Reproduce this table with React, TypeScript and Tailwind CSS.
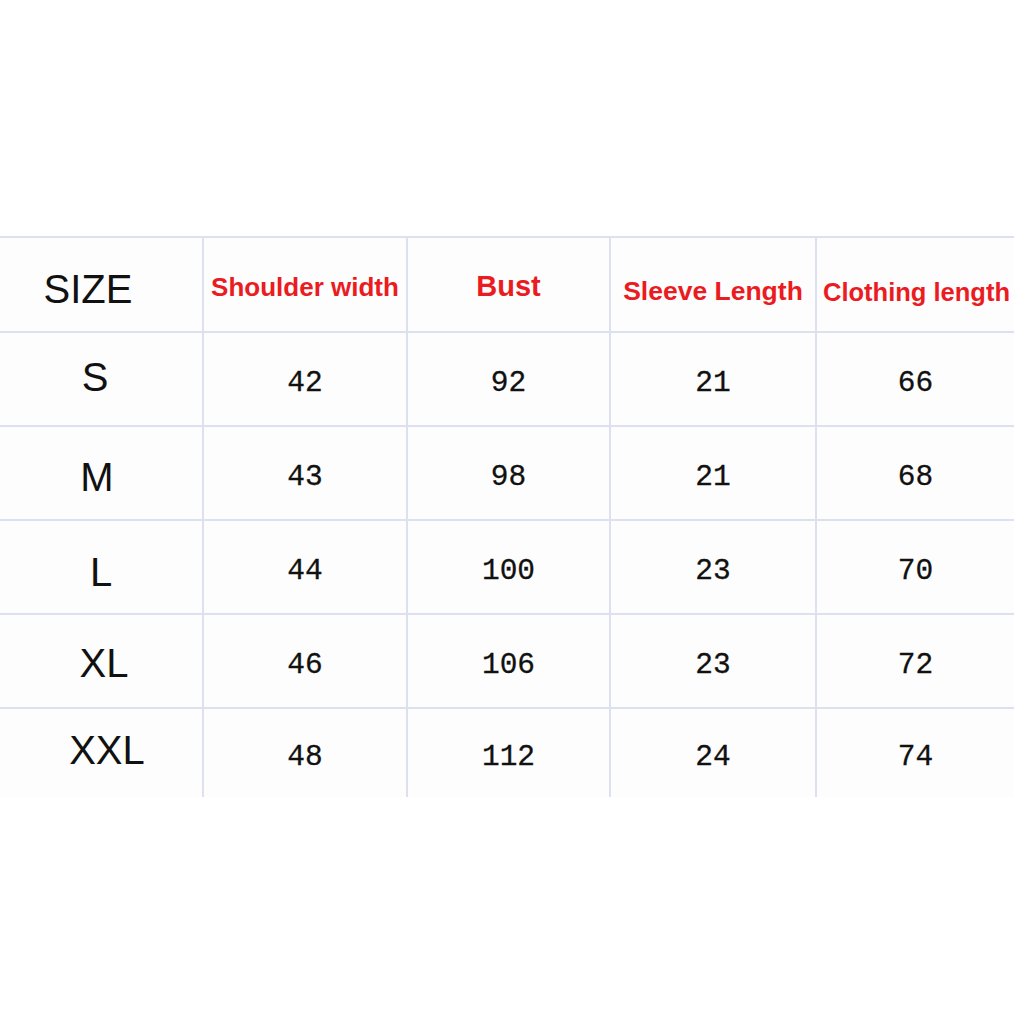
import React from 'react';

const rows: { size: string; shift: string; values: number[] }[] = [
  { size: 'S', shift: 'pb-[4px] pr-[12px]', values: [42, 92, 21, 66] },
  { size: 'M', shift: 'pt-[8px] pr-[8px]', values: [43, 98, 21, 68] },
  { size: 'L', shift: 'pt-[10px]', values: [44, 100, 23, 70] },
  { size: 'XL', shift: 'pt-[4px] pl-[6px]', values: [46, 106, 23, 72] },
  { size: 'XXL', shift: 'pb-[6px] pl-[12px]', values: [48, 112, 24, 74] },
];

const cols = 'grid grid-cols-[202px_204px_203px_206px_199px]';

export default function App() {
  return (
    <div className="w-[1024px] h-[1024px] bg-white pt-[236px]" style={{ fontFamily: '"Liberation Sans", Arial, sans-serif' }}>
      <div className="w-[1014px] bg-[#fdfdfd]">
        {/* Header */}
        <div className={`${cols} h-[95px] border-t-2 border-[#dde0ee]`}>
          <div className="flex items-center justify-center pr-[26px] pt-[8px] text-[40px] text-[#111]">SIZE</div>
          <div className="flex items-center justify-center border-l-2 border-[#dde0ee] pt-[6px] text-[26px] font-bold text-[#ea1c22]">
            Shoulder width
          </div>
          <div className="flex items-center justify-center border-l-2 border-[#dde0ee] pt-[4px] text-[29px] font-bold text-[#ea1c22]">
            Bust
          </div>
          <div className="flex items-center justify-center border-l-2 border-[#dde0ee] pt-[14px] text-[26.5px] font-bold text-[#ea1c22]">
            Sleeve Length
          </div>
          <div className="flex items-center justify-center border-l-2 border-[#dde0ee] pt-[16px] pl-[2px] text-[25.5px] font-bold text-[#ea1c22]">
            Clothing length
          </div>
        </div>

        {/* Body */}
        {rows.map((r, i) => (
          <div
            key={r.size}
            className={`${cols} ${i === rows.length - 1 ? 'h-[90px]' : 'h-[94px]'} border-t-2 border-[#dde0ee]`}
          >
            <div className={`flex items-center justify-center text-[40px] text-[#111] ${r.shift}`}>{r.size}</div>
            {r.values.map((v, j) => (
              <div
                key={j}
                className="flex items-center justify-center border-l-2 border-[#dde0ee] pt-[8px] text-[29.5px] text-[#111] [-webkit-text-stroke:0.3px_#111]"
                style={{ fontFamily: '"Liberation Mono", "Courier New", monospace' }}
              >
                {v}
              </div>
            ))}
          </div>
        ))}
      </div>
    </div>
  );
}
